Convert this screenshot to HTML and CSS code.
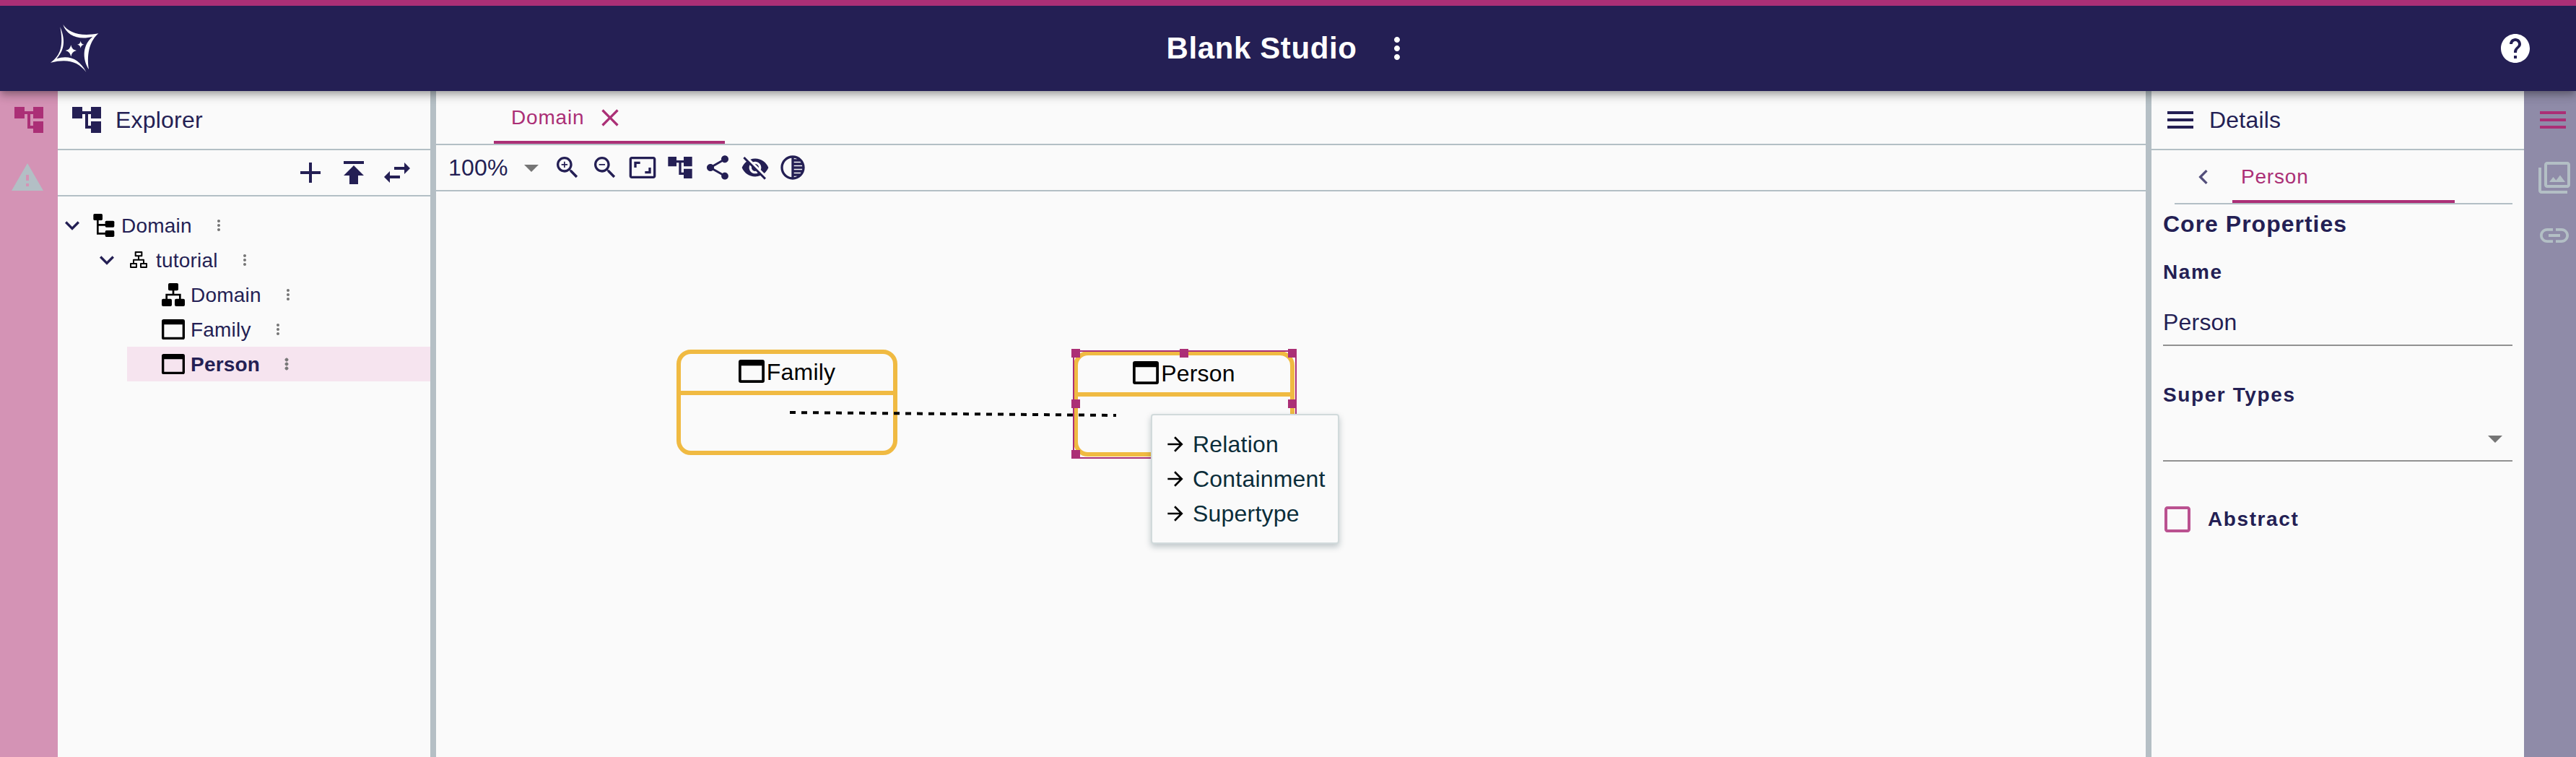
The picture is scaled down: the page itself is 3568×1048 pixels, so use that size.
FILE: index.html
```html
<!DOCTYPE html>
<html lang="en">
<head>
<meta charset="utf-8">
<title>Blank Studio</title>
<link rel="stylesheet" href="styles.css">
</head>
<body>
<svg class="sprite" aria-hidden="true">
  <symbol id="account-tree" viewBox="0 0 24 24"><path d="M22 11V3h-7v3H9V3H2v8h7V8h2v10h4v3h7v-8h-7v3h-2V8h2v3z"/></symbol>
  <symbol id="warning" viewBox="0 0 24 24"><path d="M1 21h22L12 2 1 21zm12-3h-2v-2h2v2zm0-4h-2v-4h2v4z"/></symbol>
  <symbol id="add" viewBox="0 0 24 24"><path d="M19 13h-6v6h-2v-6H5v-2h6V5h2v6h6v2z"/></symbol>
  <symbol id="publish" viewBox="0 0 24 24"><path d="M5 4v2h14V4H5zm0 10h4v6h6v-6h4l-7-7-7 7z"/></symbol>
  <symbol id="swap" viewBox="0 0 24 24"><path d="M6.99 11L3 15l3.99 4v-3H14v-2H6.99v-3zM21 9l-3.99-4v3H10v2h7.01v3L21 9z"/></symbol>
  <symbol id="more" viewBox="0 0 24 24"><path d="M12 8c1.1 0 2-.9 2-2s-.9-2-2-2-2 .9-2 2 .9 2 2 2zm0 2c-1.1 0-2 .9-2 2s.9 2 2 2 2-.9 2-2-.9-2-2-2zm0 6c-1.1 0-2 .9-2 2s.9 2 2 2 2-.9 2-2-.9-2-2-2z"/></symbol>
  <symbol id="help" viewBox="0 0 24 24"><path d="M12 2C6.48 2 2 6.48 2 12s4.48 10 10 10 10-4.48 10-10S17.52 2 12 2zm1 17h-2v-2h2v2zm2.07-7.75l-.9.92C13.45 12.9 13 13.5 13 15h-2v-.5c0-1.1.45-2.1 1.17-2.83l1.24-1.26c.37-.36.59-.86.59-1.41 0-1.1-.9-2-2-2s-2 .9-2 2H8c0-2.21 1.79-4 4-4s4 1.79 4 4c0 .88-.36 1.68-.93 2.25z"/></symbol>
  <symbol id="expand" viewBox="0 0 24 24"><path d="M16.59 8.59L12 13.17 7.41 8.59 6 10l6 6 6-6z"/></symbol>
  <symbol id="chevron-left" viewBox="0 0 24 24"><path d="M15.41 7.41L14 6l-6 6 6 6 1.41-1.41L10.83 12z"/></symbol>
  <symbol id="close" viewBox="0 0 24 24"><path d="M19 6.41L17.59 5 12 10.59 6.41 5 5 6.41 10.59 12 5 17.59 6.41 19 12 13.41 17.59 19 19 17.59 13.41 12z"/></symbol>
  <symbol id="drop-down" viewBox="0 0 24 24"><path d="M7 10l5 5 5-5z"/></symbol>
  <symbol id="zoom-in" viewBox="0 0 24 24"><path d="M15.5 14h-.79l-.28-.27C15.41 12.59 16 11.11 16 9.5 16 5.91 13.09 3 9.5 3S3 5.91 3 9.5 5.91 16 9.5 16c1.61 0 3.09-.59 4.23-1.57l.27.28v.79l5 4.99L20.49 19l-4.99-5zm-6 0C7.01 14 5 11.99 5 9.5S7.01 5 9.5 5 14 7.01 14 9.5 11.99 14 9.5 14z"/><path d="M12 10h-2v2H9v-2H7V9h2V7h1v2h2v1z"/></symbol>
  <symbol id="zoom-out" viewBox="0 0 24 24"><path d="M15.5 14h-.79l-.28-.27C15.41 12.59 16 11.11 16 9.5 16 5.91 13.09 3 9.5 3S3 5.91 3 9.5 5.91 16 9.5 16c1.61 0 3.09-.59 4.23-1.57l.27.28v.79l5 4.99L20.49 19l-4.99-5zm-6 0C7.01 14 5 11.99 5 9.5S7.01 5 9.5 5 14 7.01 14 9.5 11.99 14 9.5 14zM7 9h5v1H7z"/></symbol>
  <symbol id="aspect-ratio" viewBox="0 0 24 24"><path d="M19 12h-2v3h-3v2h5v-5zM7 9h3V7H5v5h2V9zm14-6H3c-1.1 0-2 .9-2 2v14c0 1.1.9 2 2 2h18c1.1 0 2-.9 2-2V5c0-1.1-.9-2-2-2zm0 16.01H3V4.99h18v14.02z"/></symbol>
  <symbol id="share" viewBox="0 0 24 24"><path d="M18 16.08c-.76 0-1.44.3-1.96.77L8.91 12.7c.05-.23.09-.46.09-.7s-.04-.47-.09-.7l7.05-4.11c.54.5 1.25.81 2.04.81 1.66 0 3-1.34 3-3s-1.34-3-3-3-3 1.34-3 3c0 .24.04.47.09.7L8.04 9.81C7.5 9.31 6.79 9 6 9c-1.66 0-3 1.34-3 3s1.34 3 3 3c.79 0 1.5-.31 2.04-.81l7.12 4.16c-.05.21-.08.43-.08.65 0 1.61 1.31 2.92 2.92 2.92 1.61 0 2.92-1.31 2.92-2.92s-1.31-2.92-2.92-2.92z"/></symbol>
  <symbol id="visibility-off" viewBox="0 0 24 24"><path d="M12 7c2.76 0 5 2.24 5 5 0 .65-.13 1.26-.36 1.83l2.92 2.92c1.51-1.26 2.7-2.89 3.43-4.75-1.73-4.39-6-7.5-11-7.5-1.4 0-2.74.25-3.98.7l2.16 2.16C10.74 7.13 11.35 7 12 7zM2 4.27l2.28 2.28.46.46C3.08 8.3 1.78 10.02 1 12c1.73 4.39 6 7.5 11 7.5 1.55 0 3.03-.3 4.38-.84l.42.42L19.73 22 21 20.73 3.27 3 2 4.27zM7.53 9.8l1.55 1.55c-.05.21-.08.43-.08.65 0 1.66 1.34 3 3 3 .22 0 .44-.03.65-.08l1.55 1.55c-.67.33-1.41.53-2.2.53-2.76 0-5-2.24-5-5 0-.79.2-1.53.53-2.2zm4.31-.78l3.15 3.15.02-.16c0-1.66-1.34-3-3-3l-.17.01z"/></symbol>
  <symbol id="tonality" viewBox="0 0 24 24"><path d="M12 2C6.48 2 2 6.48 2 12s4.48 10 10 10 10-4.48 10-10S17.52 2 12 2zm-1 17.93c-3.94-.49-7-3.85-7-7.93s3.05-7.44 7-7.93v15.86zm2-15.86c1.03.13 2 .45 2.87.93H13v-.93zM13 7h5.24c.25.31.48.65.68 1H13V7zm0 3h6.74c.08.33.15.66.19 1H13v-1zm0 9.93V19h2.87c-.87.48-1.84.8-2.87.93zM18.24 17H13v-1h5.92c-.2.35-.43.69-.68 1zm1.5-3H13v-1h6.93c-.04.34-.11.67-.19 1z"/></symbol>
  <symbol id="menu" viewBox="0 0 24 24"><path d="M3 18h18v-2H3v2zm0-5h18v-2H3v2zm0-7v2h18V6H3z"/></symbol>
  <symbol id="filter" viewBox="0 0 24 24"><path d="M15.96 10.29l-2.75 3.54-1.96-2.36L8.5 15h11l-3.54-4.71zM3 5H1v16c0 1.1.9 2 2 2h18v-2H3V5zm18-4H7c-1.1 0-2 .9-2 2v14c0 1.1.9 2 2 2h14c1.1 0 2-.9 2-2V3c0-1.1-.9-2-2-2zm0 16H7V3h14v14z"/></symbol>
  <symbol id="link" viewBox="0 0 24 24"><path d="M3.9 12c0-1.71 1.39-3.1 3.1-3.1h4V7H7c-2.76 0-5 2.24-5 5s2.24 5 5 5h4v-1.9H7c-1.71 0-3.1-1.39-3.1-3.1zM8 13h8v-2H8v2zm9-6h-4v1.9h4c1.71 0 3.1 1.39 3.1 3.1s-1.39 3.1-3.1 3.1h-4V17h4c2.76 0 5-2.24 5-5s-2.24-5-5-5z"/></symbol>
  <symbol id="checkbox" viewBox="0 0 24 24"><path d="M19 5v14H5V5h14m0-2H5c-1.1 0-2 .9-2 2v14c0 1.1.9 2 2 2h14c1.1 0 2-.9 2-2V5c0-1.1-.9-2-2-2z"/></symbol>
  <symbol id="arrow" viewBox="0 0 24 24"><path d="M12 4l-1.41 1.41L16.17 11H4v2h12.17l-5.58 5.59L12 20l8-8z"/></symbol>
  <symbol id="domain-doc" viewBox="0 0 96 96">
    <rect x="4" y="0" width="38" height="27" rx="5"/><rect x="53" y="29" width="38" height="27" rx="5"/><rect x="53" y="69" width="38" height="27" rx="5"/>
    <path d="M22 24V82H56M22 46H56" fill="none" stroke="#000" stroke-width="8"/>
  </symbol>
  <symbol id="package" viewBox="0 0 96 96">
    <path d="M35 15H61V31H35zM15 63H39V78H15zM57 63H81V78H57zM48 31V47M27 63V47H69V63" fill="none" stroke="#000" stroke-width="6" stroke-linejoin="round"/>
  </symbol>
  <symbol id="diagram" viewBox="0 0 96 96">
    <rect x="27" y="0" width="42" height="31" rx="6"/><rect x="0" y="65" width="42" height="31" rx="6"/><rect x="54" y="65" width="42" height="31" rx="6"/>
    <path d="M48 28V48M20 68V48H76V68" fill="none" stroke="#000" stroke-width="8"/>
  </symbol>
  <symbol id="entity" viewBox="0 0 96 86" preserveAspectRatio="none">
    <path fill-rule="evenodd" d="M8 0H88Q96 0 96 8V78Q96 86 88 86H8Q0 86 0 78V8Q0 0 8 0zM10 22V76H86V22z"/>
  </symbol>
</svg>

<header class="navbar">
  <svg class="logo" viewBox="0 0 270 258">
    <path d="M82 30C104 62 151 82 229 67C198 94 178 143 189 216C160 170 164 113 205 80C148 96 96 76 82 30z"/>
    <path d="M70 40C86 79 97 127 55 172C106 155 150 173 178 227C144 183 101 171 30 188C73 158 84 117 70 40z"/>
    <path d="M115 115Q118 135 138 138Q118 142 115 163Q111 142 92 138Q111 135 115 115zM155 98Q157 111 169 113Q157 115 155 128Q153 115 141 113Q153 111 155 98z"/>
  </svg>
  <div class="navbar-title">
    <h1>Blank Studio</h1>
    <svg class="icon-lg"><use href="#more"/></svg>
  </div>
  <svg class="icon-lg"><use href="#help"/></svg>
</header>

<main class="workbench">
  <nav class="rail rail-left">
    <svg class="icon-lg active"><use href="#account-tree"/></svg>
    <svg class="icon-lg nudged"><use href="#warning"/></svg>
  </nav>

  <section class="explorer">
    <div class="view-header">
      <svg class="icon-lg"><use href="#account-tree"/></svg>
      <span>Explorer</span>
    </div>
    <div class="explorer-tools">
      <svg class="icon-lg"><use href="#add"/></svg>
      <svg class="icon-lg"><use href="#publish"/></svg>
      <svg class="icon-lg"><use href="#swap"/></svg>
    </div>
    <div class="tree">
      <div class="item"><svg class="icon-md"><use href="#expand"/></svg><svg class="item-icon"><use href="#domain-doc"/></svg><span>Domain</span><svg class="kebab"><use href="#more"/></svg></div>
      <div class="item level-1"><svg class="icon-md"><use href="#expand"/></svg><svg class="item-icon"><use href="#package"/></svg><span>tutorial</span><svg class="kebab"><use href="#more"/></svg></div>
      <div class="item leaf"><svg class="item-icon"><use href="#diagram"/></svg><span>Domain</span><svg class="kebab"><use href="#more"/></svg></div>
      <div class="item leaf"><svg class="item-icon entity"><use href="#entity"/></svg><span>Family</span><svg class="kebab"><use href="#more"/></svg></div>
      <div class="item leaf selected"><svg class="item-icon entity"><use href="#entity"/></svg><span>Person</span><svg class="kebab"><use href="#more"/></svg></div>
    </div>
  </section>

  <div class="splitter"></div>

  <section class="editor">
    <div class="tabs">
      <div class="tab"><span>Domain</span><svg class="icon-md"><use href="#close"/></svg></div>
    </div>
    <div class="diagram-tools">
      <span class="zoom">100%</span>
      <svg class="icon-lg grey"><use href="#drop-down"/></svg>
      <div class="tool-icons">
        <svg class="icon-md"><use href="#zoom-in"/></svg>
        <svg class="icon-md"><use href="#zoom-out"/></svg>
        <svg class="icon-md"><use href="#aspect-ratio"/></svg>
        <svg class="icon-md"><use href="#account-tree"/></svg>
        <svg class="icon-md"><use href="#share"/></svg>
        <svg class="icon-md"><use href="#visibility-off"/></svg>
        <svg class="icon-md"><use href="#tonality"/></svg>
      </div>
    </div>
    <div class="canvas">
      <div class="node family"><div class="node-label"><svg class="node-icon"><use href="#entity"/></svg><span>Family</span></div></div>
      <div class="node person"><div class="node-label"><svg class="node-icon"><use href="#entity"/></svg><span>Person</span></div></div>
      <div class="selection">
        <i class="handle top start"></i><i class="handle top center"></i><i class="handle top end"></i>
        <i class="handle middle start"></i><i class="handle middle end"></i>
        <i class="handle bottom start"></i><i class="handle bottom center"></i><i class="handle bottom end"></i>
      </div>
      <svg class="edge" viewBox="0 0 460 12"><line x1="0" y1="4" x2="452" y2="8"/></svg>
      <div class="edge-menu">
        <div class="edge-option"><svg><use href="#arrow"/></svg><span>Relation</span></div>
        <div class="edge-option"><svg><use href="#arrow"/></svg><span>Containment</span></div>
        <div class="edge-option"><svg><use href="#arrow"/></svg><span>Supertype</span></div>
      </div>
    </div>
  </section>

  <div class="splitter"></div>

  <section class="details">
    <div class="view-header">
      <svg class="icon-lg"><use href="#menu"/></svg>
      <span>Details</span>
    </div>
    <div class="details-tabs">
      <svg class="icon-md"><use href="#chevron-left"/></svg>
      <div class="details-tab">Person</div>
    </div>
    <div class="form">
      <h2>Core Properties</h2>
      <label class="field-label">Name</label>
      <div class="field">Person</div>
      <label class="field-label">Super Types</label>
      <div class="field select"><svg class="icon-lg grey"><use href="#drop-down"/></svg></div>
      <div class="check"><svg class="icon-lg"><use href="#checkbox"/></svg><span class="field-label">Abstract</span></div>
    </div>
  </section>

  <nav class="rail rail-right">
    <svg class="icon-lg active"><use href="#menu"/></svg>
    <svg class="icon-lg"><use href="#filter"/></svg>
    <svg class="icon-lg"><use href="#link"/></svg>
  </nav>
</main>
</body>
</html>
```
FILE: styles.css
```css
* { box-sizing: border-box; }

body {
  margin: 0;
  height: 1048px;
  display: flex;
  flex-direction: column;
  overflow: hidden;
  background: #fafafa;
  color: #241f54;
  font-family: "Liberation Sans", Arial, sans-serif;
  font-size: 32px;
  letter-spacing: .2px;
}

svg { fill: currentColor; flex: none; display: block; }
.sprite { position: absolute; width: 0; height: 0; }
.icon-lg { width: 48px; height: 48px; }
.icon-md { width: 40px; height: 40px; }
.grey { color: #757575; }

/* Navigation bar */
.navbar {
  position: relative;
  z-index: 1;
  height: 126px;
  flex: none;
  display: grid;
  grid-template-columns: 1fr auto 1fr;
  align-items: center;
  padding: 0 60px;
  border-top: 8px solid #ab2f76;
  background: #241f54;
  color: #fff;
  box-shadow: 0 4px 8px -2px rgba(0,0,0,.2), 0 8px 10px rgba(0,0,0,.14), 0 2px 20px rgba(0,0,0,.12);
}
.logo { width: 90px; height: 86px; }
.navbar-title { display: flex; align-items: center; gap: 32px; padding-left: 7px; }
.navbar-title h1 { margin: 0; font-size: 42px; line-height: 48px; letter-spacing: .6px; }
.navbar > .icon-lg { justify-self: end; }

.workbench { flex: 1; min-height: 0; display: flex; }
.splitter { width: 8px; flex: none; background: #b5bfc5; }

/* Side rails */
.rail { flex: none; display: flex; flex-direction: column; gap: 32px; padding-top: 16px; color: #b3bfc5; }
.rail .active { color: #ab2f76; }
.rail-left { width: 80px; padding-left: 16px; background: #d493b5; }
.rail-left .nudged { margin-left: -2px; }
.rail-right { width: 72px; padding-left: 18px; background: #8f8ba8; }
.rail-right .active { margin-left: -2px; }

/* View headers */
.view-header {
  height: 82px;
  display: flex;
  align-items: center;
  gap: 16px;
  padding-left: 16px;
  border-bottom: 2px solid #b3bfc5;
}

/* Explorer */
.explorer { width: 516px; flex: none; }
.explorer-tools {
  height: 64px;
  display: flex;
  align-items: center;
  justify-content: flex-end;
  gap: 12px;
  padding-right: 22px;
  border-bottom: 2px solid #b3bfc5;
}
.tree { padding-top: 16px; font-size: 28px; }
.item { height: 48px; display: flex; align-items: center; }
.item.level-1 { margin-left: 48px; }
.item.leaf { margin-left: 96px; padding-left: 48px; }
.item-icon { width: 32px; height: 32px; margin: 0 8px; color: #000; }
.leaf .item-icon { margin-left: 0; }
.item-icon.entity { height: 28px; }
.item span { line-height: 32px; padding-top: 2px; }
.kebab { width: 24px; height: 24px; margin-left: 25px; color: #757575; }
.selected { background: #f6e4ef; font-weight: bold; }
.selected .kebab { stroke: #757575; stroke-width: 1; }

/* Editor */
.editor { flex: 1; min-width: 0; display: flex; flex-direction: column; }
.tabs { height: 75px; flex: none; padding-left: 80px; border-bottom: 2px solid #b3bfc5; }
.tab {
  width: 320px;
  height: 73px;
  display: flex;
  align-items: center;
  gap: 16px;
  padding: 5px 0 0 24px;
  border-bottom: 4px solid #ab2f76;
  color: #ab2f76;
  font-size: 28px;
  letter-spacing: .8px;
}
.diagram-tools {
  height: 64px;
  flex: none;
  display: flex;
  align-items: center;
  padding-left: 17px;
  border-bottom: 2px solid #b3bfc5;
}
.zoom { width: 91px; }
.tool-icons { display: flex; gap: 12px; padding-left: 6px; }

/* Diagram */
.canvas { position: relative; flex: 1; color: #000; }
.node {
  position: absolute;
  width: 306px;
  height: 146px;
  border: 6px solid #f0ba42;
  border-radius: 20px;
}
.node.family { left: 333px; top: 219px; }
.node.person { left: 883px; top: 221px; }
.node-label {
  height: 57px;
  display: flex;
  align-items: center;
  justify-content: center;
  gap: 3px;
  padding-bottom: 4px;
  border-bottom: 6px solid #f0ba42;
}
.node-label span { padding-top: 3px; }
.node-icon { width: 36px; height: 32px; }
.selection { position: absolute; left: 882px; top: 220px; width: 310px; height: 150px; border: 2px solid #ab2f76; }
.handle { position: absolute; width: 12px; height: 12px; background: #ab2f76; }
.handle.top { top: -4px; }
.handle.middle { top: 66px; }
.handle.bottom { top: 136px; }
.handle.start { left: -4px; }
.handle.center { left: 146px; }
.handle.end { left: 296px; }
.edge { position: absolute; left: 490px; top: 302px; width: 460px; height: 12px; }
.edge line { stroke: #000; stroke-width: 4; stroke-dasharray: 8 8; }
.edge-menu {
  position: absolute;
  left: 990px;
  top: 308px;
  width: 261px;
  height: 180px;
  padding: 16px;
  border: 2px solid #d1dadb;
  border-radius: 4px;
  background: #fafafa;
  color: #0b2d39;
  box-shadow: 0 4px 8px rgba(11,45,57,.25);
}
.edge-option { height: 48px; display: flex; align-items: center; gap: 8px; }
.edge-option svg { width: 32px; height: 32px; color: #000; }

/* Details */
.details { width: 516px; flex: none; }
.details-tabs {
  height: 75px;
  display: flex;
  align-items: center;
  margin: 0 16px 0 32px;
  padding-left: 20px;
  border-bottom: 2px solid #b3bfc5;
}
.details-tabs .icon-md { color: #534f7b; }
.details-tab {
  width: 308px;
  height: 73px;
  margin-left: 20px;
  padding-left: 12px;
  border-bottom: 4px solid #ab2f76;
  color: #ab2f76;
  font-size: 28px;
  line-height: 73px;
  letter-spacing: .8px;
}
.form { padding: 8px 16px; display: flex; flex-direction: column; }
.form h2 { margin: 0; font-size: 32px; line-height: 38px; letter-spacing: 1px; }
.field-label { font-size: 28px; font-weight: bold; line-height: 36px; letter-spacing: 1.6px; }
.form > .field-label { margin-top: 30px; }
.field {
  height: 64px;
  margin: 20px 0;
  line-height: 62px;
  border-bottom: 2px solid #919191;
}
.field.select { display: flex; justify-content: flex-end; height: 56px; margin: 18px 0 56px; }
.check { display: flex; align-items: center; gap: 18px; margin-left: -4px; }
.check .icon-lg { color: #ba5190; }
```
